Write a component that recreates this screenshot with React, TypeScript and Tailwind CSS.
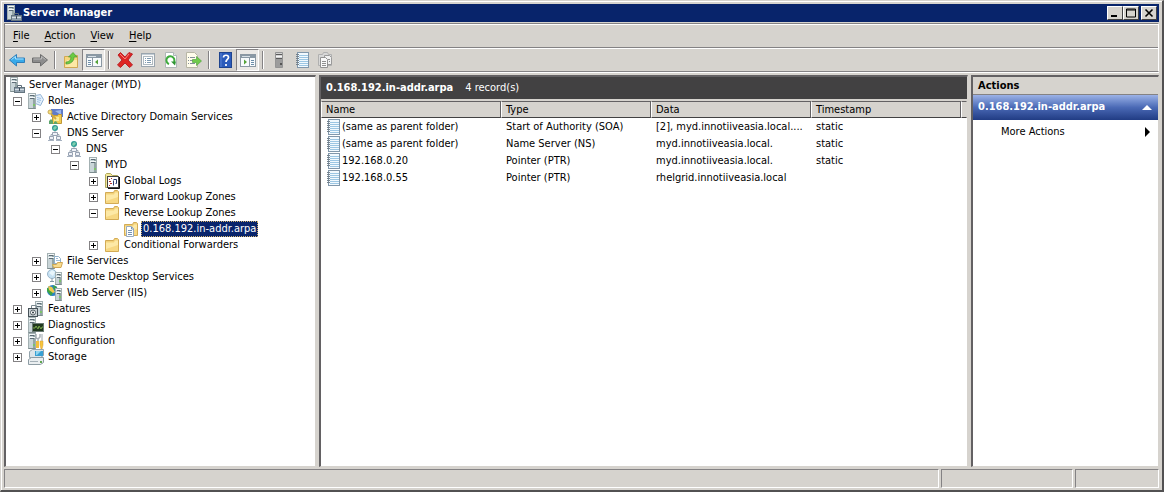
import React, { useState } from 'react';
import clsx from 'clsx';

type IconProps = { children: React.ReactNode };

const Svg: React.FC<IconProps> = ({ children }) => (
  <svg width="16" height="16" viewBox="0 0 16 16" className="block shrink-0" aria-hidden="true">
    {children}
  </svg>
);

// Shared parts
const Tower = ({ x = 3, y = 0, w = 8, h = 15 }: { x?: number; y?: number; w?: number; h?: number }) => (
  <g>
    <rect x={x + 0.5} y={y + 0.5} width={w} height={h} fill="#94a5a6" stroke="#a3b0b2" />
    <rect x={x + 1} y={y + 1} width={w - 3} height={h - 1} fill="#c9d5d8" />
    <path d={`M${x + 1} ${y + 1.5}h${w - 1}M${x + 1} ${y + 4.5}h${w - 1}`} stroke="#f4f8f9" />
    <path d={`M${x + 2} ${y + 2.5}h${w - 3}M${x + 2} ${y + 5.5}h${w - 3}`} stroke="#5d6c76" />
    <path d={`M${x + 0.5} ${y + h + 0.5}h${w}`} stroke="#7d8d8f" />
    <rect x={x + w - 2} y={y + h - 4} width="2" height="2" fill="#7cc46a" />
  </g>
);

const FolderShape = () => (
  <g>
    <path d="M1.5 14.5v-11h8l1-2h3l1 1v12z" fill="#f3d27a" stroke="#d3ab55" />
    <path d="M2 14V5.5h8l1-2h3V14z" fill="#fde9a6" />
    <path d="M2 14h12V8L2 12z" fill="#f7d883" />
  </g>
);

const Notebook = () => (
  <g>
    <rect x="3.5" y="0.5" width="11" height="15" fill="#f2f9fe" stroke="#8197ab" />
    <path d="M5 3.5h9M5 5.5h9M5 7.5h9M5 9.5h9M5 11.5h9M5 13.5h9" stroke="#9cc6e3" />
    <path d="M2 2.5h3M2 4.5h3M2 6.5h3M2 8.5h3M2 10.5h3M2 12.5h3" stroke="#75828d" />
  </g>
);

const Boxes = () => (
  <g>
    <path d="M8 6v4M4 12V9.5h8V12" fill="none" stroke="#a0abb6" />
    <circle cx="8" cy="3" r="3" fill="#2e9a94" />
    <path d="M6 3l2-2 2 1-1 2-2 1z" fill="#7ccfae" />
    <path d="M5.5 7.5h5v3h-5zM2.5 11.5h4v3h-4zM9.5 11.5h4v3h-4z" fill="#eef1f7" stroke="#97a2b3" />
    <path d="M1 15.5h6M9 15.5h6" stroke="#a6b1c0" />
  </g>
);

const icons = {
  manager: (
    <Svg>
      <Tower x={1} w={7} h={14} />
      <path d="M8.5 10V8.5h4V10" fill="none" stroke="#5d6d79" />
      <rect x="5.5" y="10.5" width="10" height="5" fill="#93a3b0" stroke="#64747f" />
      <path d="M6 12.5h9" stroke="#d4dce2" />
      <path d="M10 11h1v3h-1z" fill="#3c4c5a" />
    </Svg>
  ),
  roles: (
    <Svg>
      <path d="M7.5 2.5l5-1 3 5-3 6-5-2z" fill="#e3effb" stroke="#93b4d6" />
      <path d="M9 4.5l4 1M9 6.5l4 1M9 8.5l3 1" stroke="#9fc1e3" />
      <Tower x={0} w={7} />
    </Svg>
  ),
  directory: (
    <Svg>
      <path d="M4 0h12v8H4z" fill="#5f7bc8" />
      <path d="M8 2l6-1v5z" fill="#9bb6ec" />
      <path d="M5.5 6.5h5l1-1h3v9h-9z" fill="#f3cd54" stroke="#c09837" />
      <rect x="7" y="8" width="5" height="4" fill="#fcec9a" />
      <circle cx="3" cy="3" r="2" fill="#f7df78" stroke="#c9a856" />
      <path d="M4 5l5 5" stroke="#cfa940" strokeWidth="2" />
      <path d="M2 15v-3l2-2 2 2v3zM7 15v-2l2-1 2 3z" fill="#5da56c" />
    </Svg>
  ),
  dns: (
    <Svg>
      <Boxes />
    </Svg>
  ),
  server: (
    <Svg>
      <Tower x={4} w={7} />
    </Svg>
  ),
  logs: (
    <Svg>
      <path d="M1.5 14.5v-13l1-1h4l2 2h5v12z" fill="#f3e89a" stroke="#b1a95c" />
      <rect x="3.5" y="3.5" width="11" height="11" fill="#fff" stroke="#444" />
      <path d="M15.5 4v11.5H4" fill="none" stroke="#111" />
      <path d="M5 6.500h1M7 5.500h1M5 8.500h2M6 10.500h2M5 12.500h1" stroke="#b6322d" />
      <path d="M9.5 7.5v5M9.500 6.500h3v4h-1" fill="none" stroke="#293b6e" />
    </Svg>
  ),
  folder: (
    <Svg>
      <FolderShape />
    </Svg>
  ),
  zone: (
    <Svg>
      <FolderShape />
      <path d="M3.5 5.5h5l2 2v8h-7z" fill="#fff" stroke="#98abc0" />
      <path d="M8.5 6v2h2M5 9.5h4M5 11.5h4M5 13.5h4" fill="none" stroke="#7692b2" />
    </Svg>
  ),
  files: (
    <Svg>
      <Tower x={0} w={7} />
      <path d="M7.5 3.5h4l2 2v5h-6z" fill="#fff" stroke="#8fb0cb" />
      <path d="M9 5.5h2M9 7.5h4" stroke="#9dbfdd" />
      <path d="M6.5 14.5l-1-3h4l1-2h5l-1.5 5z" fill="#f8dc8e" stroke="#cfa656" />
    </Svg>
  ),
  remote: (
    <Svg>
      <circle cx="5" cy="5" r="4.5" fill="#c6e1f3" stroke="#9ab6ca" />
      <path d="M2 4l3-3 3 2-2 4z" fill="#e8f5fc" />
      <path d="M5 9.5v3M3 12.5h4" stroke="#8498a5" />
      <Tower x={8} y={3} w={6} h={12} />
    </Svg>
  ),
  web: (
    <Svg>
      <circle cx="5.5" cy="5.5" r="5.5" fill="#2c83c6" />
      <path d="M0 3l4 1 2 4-2 3-4-5zM6 0l4 2-3 3z" fill="#3da443" />
      <path d="M1 1l4 1 3 5-2 1-4-3z" fill="#f0c94b" />
      <Tower x={8} y={3} w={6} h={12} />
    </Svg>
  ),
  features: (
    <Svg>
      <Tower x={7} y={0} w={7} h={14} />
      <path d="M3.5 7V4.500h5V7" fill="none" stroke="#7b8a91" />
      <rect x="0.5" y="7.5" width="9" height="8" fill="#c9d1d4" stroke="#465158" />
      <circle cx="5" cy="11.5" r="2.5" fill="#fff" stroke="#525d63" />
      <circle cx="5" cy="11.5" r="1" fill="#2c383e" />
    </Svg>
  ),
  diagnostics: (
    <Svg>
      <Tower x={0} w={7} />
      <rect x="4.5" y="6.5" width="11" height="8" fill="#20381f" stroke="#6a7a74" />
      <path d="M5 11h2l1-2 2 3 1-3 2 3 1-2h1" fill="none" stroke="#79a84b" />
    </Svg>
  ),
  configuration: (
    <Svg>
      <Tower x={0} w={7} />
      <path d="M8 1v4l2 1 2-2V1M10 6v4" fill="none" stroke="#a8b0b5" strokeWidth="1.5" />
      <path d="M8 8h3v7H8z" fill="#f4be3b" />
      <path d="M14 1v7" stroke="#9ba5ac" />
      <path d="M12 8h3v4l-1 4h-1l-1-4z" fill="#f8c53a" stroke="#d09a3a" strokeWidth=".5" />
    </Svg>
  ),
  storage: (
    <Svg>
      <path d="M1.5 2.5l3-2h11v6l-3 2h-11z" fill="#dde5e9" stroke="#94a4ad" />
      <path d="M7 2h8v5H7z" fill="#38a0d3" />
      <path d="M8 2h5l-4 4H8z" fill="#91d5ef" />
      <path d="M.5 10.5l3-2h12v5l-3 2h-12z" fill="#eaeef0" stroke="#8d9ca4" />
      <path d="M2 12.5h8" stroke="#a4b0b7" />
      <path d="M12 12h2v2h-2z" fill="#61a74f" />
    </Svg>
  ),
  record: (
    <Svg>
      <Notebook />
    </Svg>
  ),
  back: (
    <Svg>
      <path d="M.5 8l7-5.5V6h8v4.500h-8V14z" fill="#38aaea" stroke="#2f7fbb" strokeLinejoin="round" />
      <path d="M2.5 7.5l4-3v2.500h8" fill="none" stroke="#a4e1ff" />
    </Svg>
  ),
  forward: (
    <Svg>
      <path d="M15.5 8l-7-5.500V6h-8v4.500h8V14z" fill="#8d8d8d" stroke="#6c6c6c" strokeLinejoin="round" />
      <path d="M1.5 7h8V4.500l4 3" fill="none" stroke="#bababa" />
    </Svg>
  ),
  up: (
    <Svg>
      <path d="M1.5 15.5v-11h7l1-1h5v12z" fill="#f7d67c" stroke="#d0a853" />
      <path d="M2 15l2-7h10v7z" fill="#fde8a5" />
      <path d="M3 10c3 0 5-2 5-5H5.500L10 .5 14 5h-3c0 4-3 7-8 7z" fill="#6bcb42" stroke="#489833" strokeWidth=".7" />
    </Svg>
  ),
  treePane: (
    <Svg>
      <rect x=".5" y="2.5" width="15" height="12" fill="#f8fbfd" stroke="#8b98a3" />
      <path d="M1 3h14v3H1z" fill="#8a99a5" />
      <path d="M2 4.5h8" stroke="#d9e1e7" />
      <path d="M6.5 6v8" stroke="#8b98a3" />
      <path d="M2 8.5h3M2 10.5h3M2 12.5h3" stroke="#6d8ea9" />
      <path d="M12 7.500v5L9 10z" fill="#54a238" />
    </Svg>
  ),
  actionPane: (
    <Svg>
      <rect x=".5" y="2.5" width="15" height="12" fill="#f8fbfd" stroke="#8b98a3" />
      <path d="M1 3h14v3H1z" fill="#8a99a5" />
      <path d="M2 4.5h8" stroke="#d9e1e7" />
      <path d="M9.500 6v8" stroke="#8b98a3" />
      <path d="M11 8.5h3M11 10.5h3M11 12.5h3" stroke="#6d8ea9" />
      <path d="M4 7.500v5L7 10z" fill="#54a238" />
    </Svg>
  ),
  remove: (
    <Svg>
      <path d="M1 3l2.500-2.500L8 5l4-4.500L15.500 2 11 8l4.500 5-3 2.500L8 11l-4.500 4.500L.5 13 5 8z" fill="#df2523" stroke="#b9262a" />
      <path d="M3 2l5 5 4-5" fill="none" stroke="#f8837c" />
    </Svg>
  ),
  properties: (
    <Svg>
      <rect x="1.5" y="1.5" width="13" height="13" fill="#f9f9f9" stroke="#9aa5ae" />
      <path d="M2 2.5h12" stroke="#c3cdd5" />
      <rect x="3.5" y="4.5" width="9" height="8" fill="#fff" stroke="#b0bac1" />
      <path d="M5 6.5h1M7 6.5h4M5 8.5h1M7 8.5h4M5 10.5h1M7 10.5h4" stroke="#7f9bb2" />
    </Svg>
  ),
  refresh: (
    <Svg>
      <path d="M2.5 .5h8l3 3v12h-11z" fill="#fff" stroke="#b0b6b7" />
      <path d="M10.5 .5v3h3" fill="#e3e7e8" stroke="#b0b6b7" />
      <path d="M6 12A4 4 0 1 1 11 10" fill="none" stroke="#3fab3d" strokeWidth="2" />
      <path d="M8 9.5h5l-1 4z" fill="#2f9533" />
    </Svg>
  ),
  exportList: (
    <Svg>
      <path d="M.5 .5h8l3 3v12H.5z" fill="#fffceb" stroke="#b8b6a5" />
      <path d="M2 5.5h1M4 5.5h5M2 8.5h1M4 8.5h4M2 11.5h1M4 11.5h5" stroke="#858f9a" />
      <path d="M6.5 7.5h4v-3l5 4.500-5 4.500v-3h-4z" fill="#71ca4b" stroke="#54a842" strokeWidth=".7" />
    </Svg>
  ),
  help: (
    <Svg>
      <rect x="2.5" y=".5" width="12" height="15" fill="#2b5bbb" stroke="#1f448e" />
      <path d="M4 1v14" stroke="#5a84d6" />
      <path d="M6.500 5.500c0-3 5-3 5 0 0 2-2.500 2-2.500 4.500M9 12v2" fill="none" stroke="#fff" strokeWidth="1.700" />
    </Svg>
  ),
  grayServer: (
    <Svg>
      <path d="M4.5 .5h7v15h-7z" fill="#9c9c9c" stroke="#949494" />
      <path d="M5 1h6v6H5z" fill="#d3d3d3" />
      <path d="M5 2.5h6M5 6.5h6" stroke="#5a5a5a" />
      <path d="M5 4.500h6" stroke="#f5f5f5" />
      <path d="M9 11h2v2H9z" fill="#555" />
    </Svg>
  ),
  copies: (
    <Svg>
      <path d="M1.5 2.5h4l1-2h4l1 2h3v11h-13z" fill="#d8d8d8" stroke="#b0b0b0" />
      <path d="M7.5 3.5h5l2 2v7h-7z" fill="#f0f0f0" stroke="#9a9a9a" />
      <path d="M3.5 5.5h5l2 2v8h-7z" fill="#f9f9f9" stroke="#929292" />
      <path d="M5 9.5h4M5 11.5h4M5 13.5h4M11 7.5h2M12 9.5h1" stroke="#8f8f8f" />
    </Svg>
  ),
};

type IconName = keyof typeof icons;

interface TreeNode {
  label: string;
  icon: IconName;
  open?: boolean;
  leaf?: boolean;
  children?: TreeNode[];
}

const tree: TreeNode[] = [
  {
    label: 'Roles',
    icon: 'roles',
    open: true,
    children: [
      { label: 'Active Directory Domain Services', icon: 'directory' },
      {
        label: 'DNS Server',
        icon: 'dns',
        open: true,
        children: [
          {
            label: 'DNS',
            icon: 'dns',
            open: true,
            children: [
              {
                label: 'MYD',
                icon: 'server',
                open: true,
                children: [
                  { label: 'Global Logs', icon: 'logs' },
                  { label: 'Forward Lookup Zones', icon: 'folder' },
                  {
                    label: 'Reverse Lookup Zones',
                    icon: 'folder',
                    open: true,
                    children: [{ label: '0.168.192.in-addr.arpa', icon: 'zone', leaf: true }],
                  },
                  { label: 'Conditional Forwarders', icon: 'folder' },
                ],
              },
            ],
          },
        ],
      },
      { label: 'File Services', icon: 'files' },
      { label: 'Remote Desktop Services', icon: 'remote' },
      { label: 'Web Server (IIS)', icon: 'web' },
    ],
  },
  { label: 'Features', icon: 'features' },
  { label: 'Diagnostics', icon: 'diagnostics' },
  { label: 'Configuration', icon: 'configuration' },
  { label: 'Storage', icon: 'storage' },
];

const records = [
  { name: '(same as parent folder)', type: 'Start of Authority (SOA)', data: '[2], myd.innotiiveasia.local....', timestamp: 'static' },
  { name: '(same as parent folder)', type: 'Name Server (NS)', data: 'myd.innotiiveasia.local.', timestamp: 'static' },
  { name: '192.168.0.20', type: 'Pointer (PTR)', data: 'myd.innotiiveasia.local.', timestamp: 'static' },
  { name: '192.168.0.55', type: 'Pointer (PTR)', data: 'rhelgrid.innotiiveasia.local', timestamp: '' },
];

interface Tool {
  icon: IconName;
  label: string;
  pressed?: boolean;
}

const toolGroups: Tool[][] = [
  [
    { icon: 'back', label: 'Back' },
    { icon: 'forward', label: 'Forward' },
  ],
  [
    { icon: 'up', label: 'Up one level' },
    { icon: 'treePane', label: 'Show/Hide Console Tree', pressed: true },
  ],
  [
    { icon: 'remove', label: 'Delete' },
    { icon: 'properties', label: 'Properties' },
    { icon: 'refresh', label: 'Refresh' },
    { icon: 'exportList', label: 'Export List' },
  ],
  [
    { icon: 'help', label: 'Help' },
    { icon: 'actionPane', label: 'Show/Hide Action Pane', pressed: true },
  ],
  [
    { icon: 'grayServer', label: 'New Server' },
    { icon: 'record', label: 'New Record' },
    { icon: 'copies', label: 'New Zone' },
  ],
];

const TreeItem: React.FC<{ node: TreeNode; selected: string; onSelect: (label: string) => void }> = ({ node, selected, onSelect }) => {
  const [open, setOpen] = useState(!!node.open);

  return (
    <li>
      <div className="flex h-4 items-center">
        {node.leaf ? (
          <span className="w-[9px]" />
        ) : (
          <button
            onClick={() => setOpen(!open)}
            aria-label={`${open ? 'Collapse' : 'Expand'} ${node.label}`}
            className="block size-[9px] border border-[#848284] bg-white text-black"
          >
            <svg width="7" height="7" viewBox="0 0 7 7" className="block">
              <path d={open ? 'M1 3.5h5' : 'M1 3.5h5M3.5 1v5'} stroke="currentColor" />
            </svg>
          </button>
        )}
        <span className="ml-1.5">{icons[node.icon]}</span>
        <button
          onClick={() => onSelect(node.label)}
          className={clsx(
            'ml-0.5 h-4 px-0.5 leading-4 whitespace-nowrap',
            selected === node.label && 'bg-[#08246b] text-white outline-1 -outline-offset-1 outline-dotted outline-[#d6b56b]'
          )}
        >
          {node.label}
        </button>
      </div>
      {open && node.children && (
        <ul className="pl-[19px]">
          {node.children.map(child => (
            <TreeItem key={child.label} node={child} selected={selected} onSelect={onSelect} />
          ))}
        </ul>
      )}
    </li>
  );
};

const TitleBar = () => (
  <header className="flex h-[18px] items-center bg-[#08246b] px-0.5 text-white">
    {icons.manager}
    <h1 className="ml-px flex-1 font-bold">Server Manager</h1>
    {['Minimize', 'Maximize', 'Close'].map(name => (
      <button
        key={name}
        aria-label={name}
        className={clsx(
          'flex h-3.5 w-4 items-center justify-center border border-t-white border-l-white border-r-[#424142] border-b-[#424142] bg-[#d6d3ce] text-black',
          name === 'Close' && 'ml-0.5'
        )}
      >
        <svg width="10" height="10" viewBox="0 0 10 10" className="block" fill="none" stroke="currentColor">
          {name === 'Minimize' && <path d="M1 8h6" strokeWidth="2" />}
          {name === 'Maximize' && <path d="M.5 1h9M.5 1v8h9V1M.5 2h9" />}
          {name === 'Close' && <path d="M1.500 1.500l7 7M8.500 1.500l-7 7" strokeWidth="1.600" />}
        </svg>
      </button>
    ))}
  </header>
);

const Toolbar = () => (
  <div className="flex h-[23px] items-center border-t border-white">
    {toolGroups.map((group, i) => (
      <React.Fragment key={i}>
        {i > 0 && <span className="mx-[3px] h-[18px] w-0.5 border-r border-l border-r-white border-l-[#848284]" />}
        {group.map(tool => (
          <button
            key={tool.label}
            aria-label={tool.label}
            aria-pressed={tool.pressed}
            className={clsx(
              'flex h-[22px] w-[23px] items-center justify-center border',
              tool.pressed ? 'border-t-[#848284] border-l-[#848284] border-r-white border-b-white bg-[#ebe9e6]' : 'border-transparent'
            )}
          >
            {icons[tool.icon]}
          </button>
        ))}
      </React.Fragment>
    ))}
  </div>
);

const paneBorder = 'border-t-2 border-l-2 border-r border-b border-t-[#636163] border-l-[#636163] border-r-[#d6d3ce] border-b-[#d6d3ce] bg-white';

export default function App() {
  const [selected, setSelected] = useState('0.168.192.in-addr.arpa');

  return (
    <div className="flex min-h-screen flex-col border-t border-r-2 border-b-2 border-l border-t-[#d6d3ce] border-r-[#525152] border-b-[#525152] border-l-[#d6d3ce] bg-[#d6d3ce] font-['DejaVu_Sans_Condensed','DejaVu_Sans',sans-serif] text-[11px] text-black">
      <div className="flex flex-1 flex-col border-t border-l border-white pt-0.5 pr-[3px] pb-0.5 pl-0.5">
        <TitleBar />

        <div className="mt-px border border-[#848284] border-r-white">
          <nav className="flex h-6 items-center gap-[15px] border-t border-b border-t-white border-b-[#848284] px-2">
            {['File', 'Action', 'View', 'Help'].map(item => (
              <button key={item}>
                <span className="underline underline-offset-2">{item[0]}</span>
                {item.slice(1)}
              </button>
            ))}
          </nav>
          <Toolbar />
        </div>

        <main className="flex flex-1 border-t border-white pt-0.5">
          <aside className={clsx('w-[312px] shrink-0', paneBorder)}>
            <div className="flex h-4 items-center pl-[3px]">
              {icons.manager}
              <span className="ml-1 whitespace-nowrap">Server Manager (MYD)</span>
            </div>
            <ul className="pl-[7px]">
              {tree.map(node => (
                <TreeItem key={node.label} node={node} selected={selected} onSelect={setSelected} />
              ))}
            </ul>
          </aside>

          <section className={clsx('ml-[3px] min-w-0 flex-1', paneBorder)}>
            <div className="flex h-[22px] items-center gap-3 bg-[#424142] px-[5px] text-white">
              <h2 className="font-bold">0.168.192.in-addr.arpa</h2>
              <span>4 record(s)</span>
            </div>
            <table className="w-full table-fixed border-separate border-spacing-0 border-t-2 border-t-[#d6d3ce] text-left">
              <thead>
                <tr className="h-[17px] bg-[#d6d3ce]">
                  {[
                    ['Name', 'w-[180px]'],
                    ['Type', 'w-[150px]'],
                    ['Data', 'w-[160px]'],
                    ['Timestamp', 'w-[150px]'],
                  ].map(([name, width]) => (
                    <th
                      key={name}
                      className={clsx('border border-t-[#636163] border-r-[#636163] border-b-[#424142] border-l-white p-0 pl-1 leading-[15px] font-normal', width)}
                    >
                      {name}
                    </th>
                  ))}
                  <td className="border border-t-[#636163] border-r-transparent border-b-[#424142] border-l-white p-0" />
                </tr>
              </thead>
              <tbody>
                {records.map((record, i) => (
                  <tr key={i} className="h-[17px] leading-4 whitespace-nowrap">
                    <td className="p-0 pl-1">
                      <div className="flex items-center gap-px">
                        {icons.record}
                        {record.name}
                      </div>
                    </td>
                    <td className="p-0 pl-[5px]">{record.type}</td>
                    <td className="p-0 pl-[5px]">{record.data}</td>
                    <td className="p-0 pl-[5px]">{record.timestamp}</td>
                    <td className="p-0" />
                  </tr>
                ))}
              </tbody>
            </table>
          </section>

          <aside className={clsx('ml-[3px] w-[188px] shrink-0', paneBorder)}>
            <h2 className="h-[18px] border-b border-[#848284] bg-[#d6d3ce] pl-[5px] leading-[17px] font-bold">Actions</h2>
            <button className="flex h-[25px] w-full items-center justify-between bg-linear-to-b from-[#9cb2e7] via-[#4a69b5] to-[#213c84] pr-1.5 pl-[5px] font-bold text-white">
              0.168.192.in-addr.arpa
              <svg width="10" height="5" viewBox="0 0 10 5" className="block" fill="currentColor">
                <path d="M5 0l5 5H0z" />
              </svg>
            </button>
            <button className="flex h-6 w-full items-center justify-between pr-2 pl-7">
              More Actions
              <svg width="5" height="10" viewBox="0 0 5 10" className="block" fill="currentColor">
                <path d="M0 0l5 5-5 5z" />
              </svg>
            </button>
          </aside>
        </main>

        <footer className="mt-0.5 flex h-[19px] gap-0.5">
          <div className="flex-1 border border-t-[#848284] border-r-white border-b-white border-l-[#848284]" />
          <div className="w-[132px] border border-t-[#848284] border-r-white border-b-white border-l-[#848284]" />
          <div className="w-[84px] border border-t-[#848284] border-r-white border-b-white border-l-[#848284]" />
        </footer>
      </div>
    </div>
  );
}
